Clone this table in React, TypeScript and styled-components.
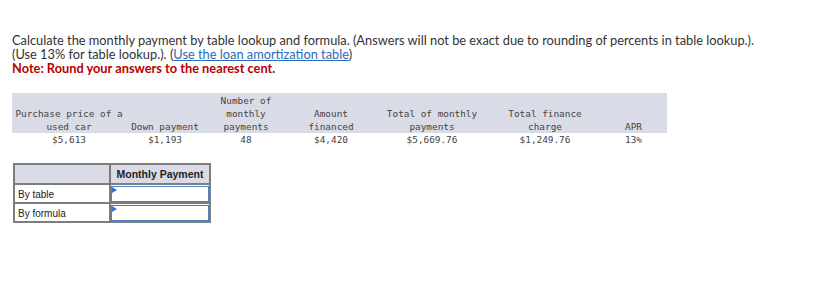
import React from "react"
import styled, { createGlobalStyle } from "styled-components"

const GlobalStyle = createGlobalStyle`
  body {
    margin: 0;
    background: #ffffff;
  }
`

const Page = styled.div`
  padding: 33px 12px 0 12px;
  font-family: "Lato", "Liberation Sans", sans-serif;
  color: #333333;
`

const Intro = styled.p`
  margin: 0;
  font-size: 12.8px;
  line-height: 14px;
`

const Link = styled.a`
  color: #2a6bb7;
  text-decoration: underline;
`

const Note = styled.span`
  font-weight: 700;
  color: #b80000;
`

const DataTable = styled.table`
  margin-top: 18px;
  border-collapse: collapse;
  font-family: "DejaVu Sans Mono", "Liberation Mono", monospace;
  font-size: 9.4px;
  color: #444444;
`

const HeadCell = styled.th<{ $w: number }>`
  width: ${p => p.$w}px;
  padding: 1px 0 0 0;
  background: #d9dce6;
  font-weight: 400;
  line-height: 13px;
  vertical-align: bottom;
  text-align: center;
`

const DataCell = styled.td`
  padding: 0;
  line-height: 13px;
  text-align: center;
`

const AnswerTable = styled.table`
  margin: 17px 0 0 1px;
  border-collapse: collapse;
  font-family: "Liberation Sans", Arial, sans-serif;
  font-size: 10px;
  color: #222222;
`

const AnswerHead = styled.th<{ $w: number }>`
  width: ${p => p.$w}px;
  height: 18px;
  padding: 0 3px;
  border: 2px solid #7d7d7d;
  background: #d9dce6;
  font-size: 10.5px;
  font-weight: 700;
  text-align: center;
`

const RowLabel = styled.td`
  height: 16px;
  padding: 1px 3px 0 3px;
  border: 2px solid #7d7d7d;
  text-align: left;
`

const InputCell = styled.td`
  padding: 0;
  border: 2px solid #7d7d7d;
`

const InputBox = styled.div`
  position: relative;
  height: 14px;
  border: 1px solid #4f7fc0;
  background: #ffffff;

  &::before {
    content: "";
    position: absolute;
    left: 0;
    top: 0;
    border-top: 3px solid transparent;
    border-bottom: 3px solid transparent;
    border-left: 5px solid #3b73c4;
  }
`

const columns = [
  { w: 114, head: ["Purchase price of a", "used car"], value: "$5,613" },
  { w: 78, head: ["Down payment"], value: "$1,193" },
  { w: 84, head: ["Number of", "monthly", "payments"], value: "48" },
  { w: 86, head: ["Amount", "financed"], value: "$4,420" },
  { w: 116, head: ["Total of monthly", "payments"], value: "$5,669.76" },
  { w: 110, head: ["Total finance", "charge"], value: "$1,249.76" },
  { w: 67, head: ["APR"], value: "13%" },
]

const rows = ["By table", "By formula"]

const App = () => (
  <Page>
    <GlobalStyle />
    <Intro>
      Calculate the monthly payment by table lookup and formula. (Answers will not be exact due to
      rounding of percents in table lookup.).
      <br />
      (Use 13% for table lookup.). (<Link href="#">Use the loan amortization table</Link>)
      <br />
      <Note>Note: Round your answers to the nearest cent.</Note>
    </Intro>

    <DataTable>
      <thead>
        <tr>
          {columns.map(c => (
            <HeadCell key={c.value} $w={c.w}>
              {c.head.map((line, i) => (
                <React.Fragment key={line}>
                  {i > 0 && <br />}
                  {line}
                </React.Fragment>
              ))}
            </HeadCell>
          ))}
        </tr>
      </thead>
      <tbody>
        <tr>
          {columns.map(c => (
            <DataCell key={c.value}>{c.value}</DataCell>
          ))}
        </tr>
      </tbody>
    </DataTable>

    <AnswerTable>
      <thead>
        <tr>
          <AnswerHead $w={88} />
          <AnswerHead $w={92}>Monthly Payment</AnswerHead>
        </tr>
      </thead>
      <tbody>
        {rows.map(r => (
          <tr key={r}>
            <RowLabel>{r}</RowLabel>
            <InputCell>
              <InputBox />
            </InputCell>
          </tr>
        ))}
      </tbody>
    </AnswerTable>
  </Page>
)

export default App
